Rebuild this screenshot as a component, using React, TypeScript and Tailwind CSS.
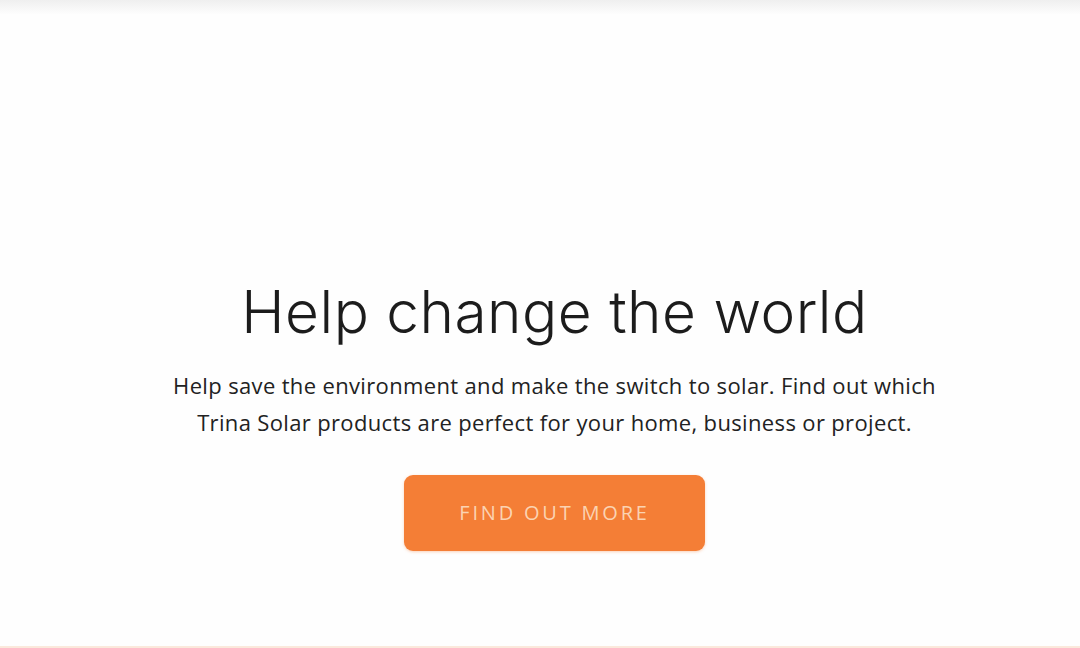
import React from 'react';

const App = () => {
  return (
    <div className="w-[1080px] h-[648px] bg-[#fefefe] flex flex-col overflow-hidden">
      {/* faded header strip */}
      <div className="h-[14px] bg-gradient-to-b from-[#efefef] to-[#fdfdfd] shrink-0"></div>

      <section className="flex-1 flex flex-col items-center pt-[264px] pl-[29px]">
        <h1
          className="text-[58.5px] leading-[68px] font-light text-[#1c1c1c] tracking-[0.5px]"
          style={{ fontFamily: 'Inter, "Open Sans", sans-serif' }}
        >
          Help change the world
        </h1>
        <p
          className="mt-[21px] text-[22px] leading-[37px] tracking-[0.35px] text-[#222222] text-center"
          style={{ fontFamily: '"Open Sans", sans-serif' }}
        >
          Help save the environment and make the switch to solar. Find out which
          <br />
          Trina Solar products are perfect for your home, business or project.
        </p>
        <button
          className="mt-[34px] w-[301px] h-[76px] rounded-[9px] bg-[#f47e36] text-[#fbd3b2] text-[20px] tracking-[2.8px] shadow-[0_1px_3px_rgba(244,126,54,0.35)]"
          style={{ fontFamily: '"Open Sans", sans-serif' }}
        >
          FIND OUT MORE
        </button>
      </section>

      <div className="h-[2px] bg-[#fbe9dc] shrink-0"></div>
    </div>
  );
};

export default App;
